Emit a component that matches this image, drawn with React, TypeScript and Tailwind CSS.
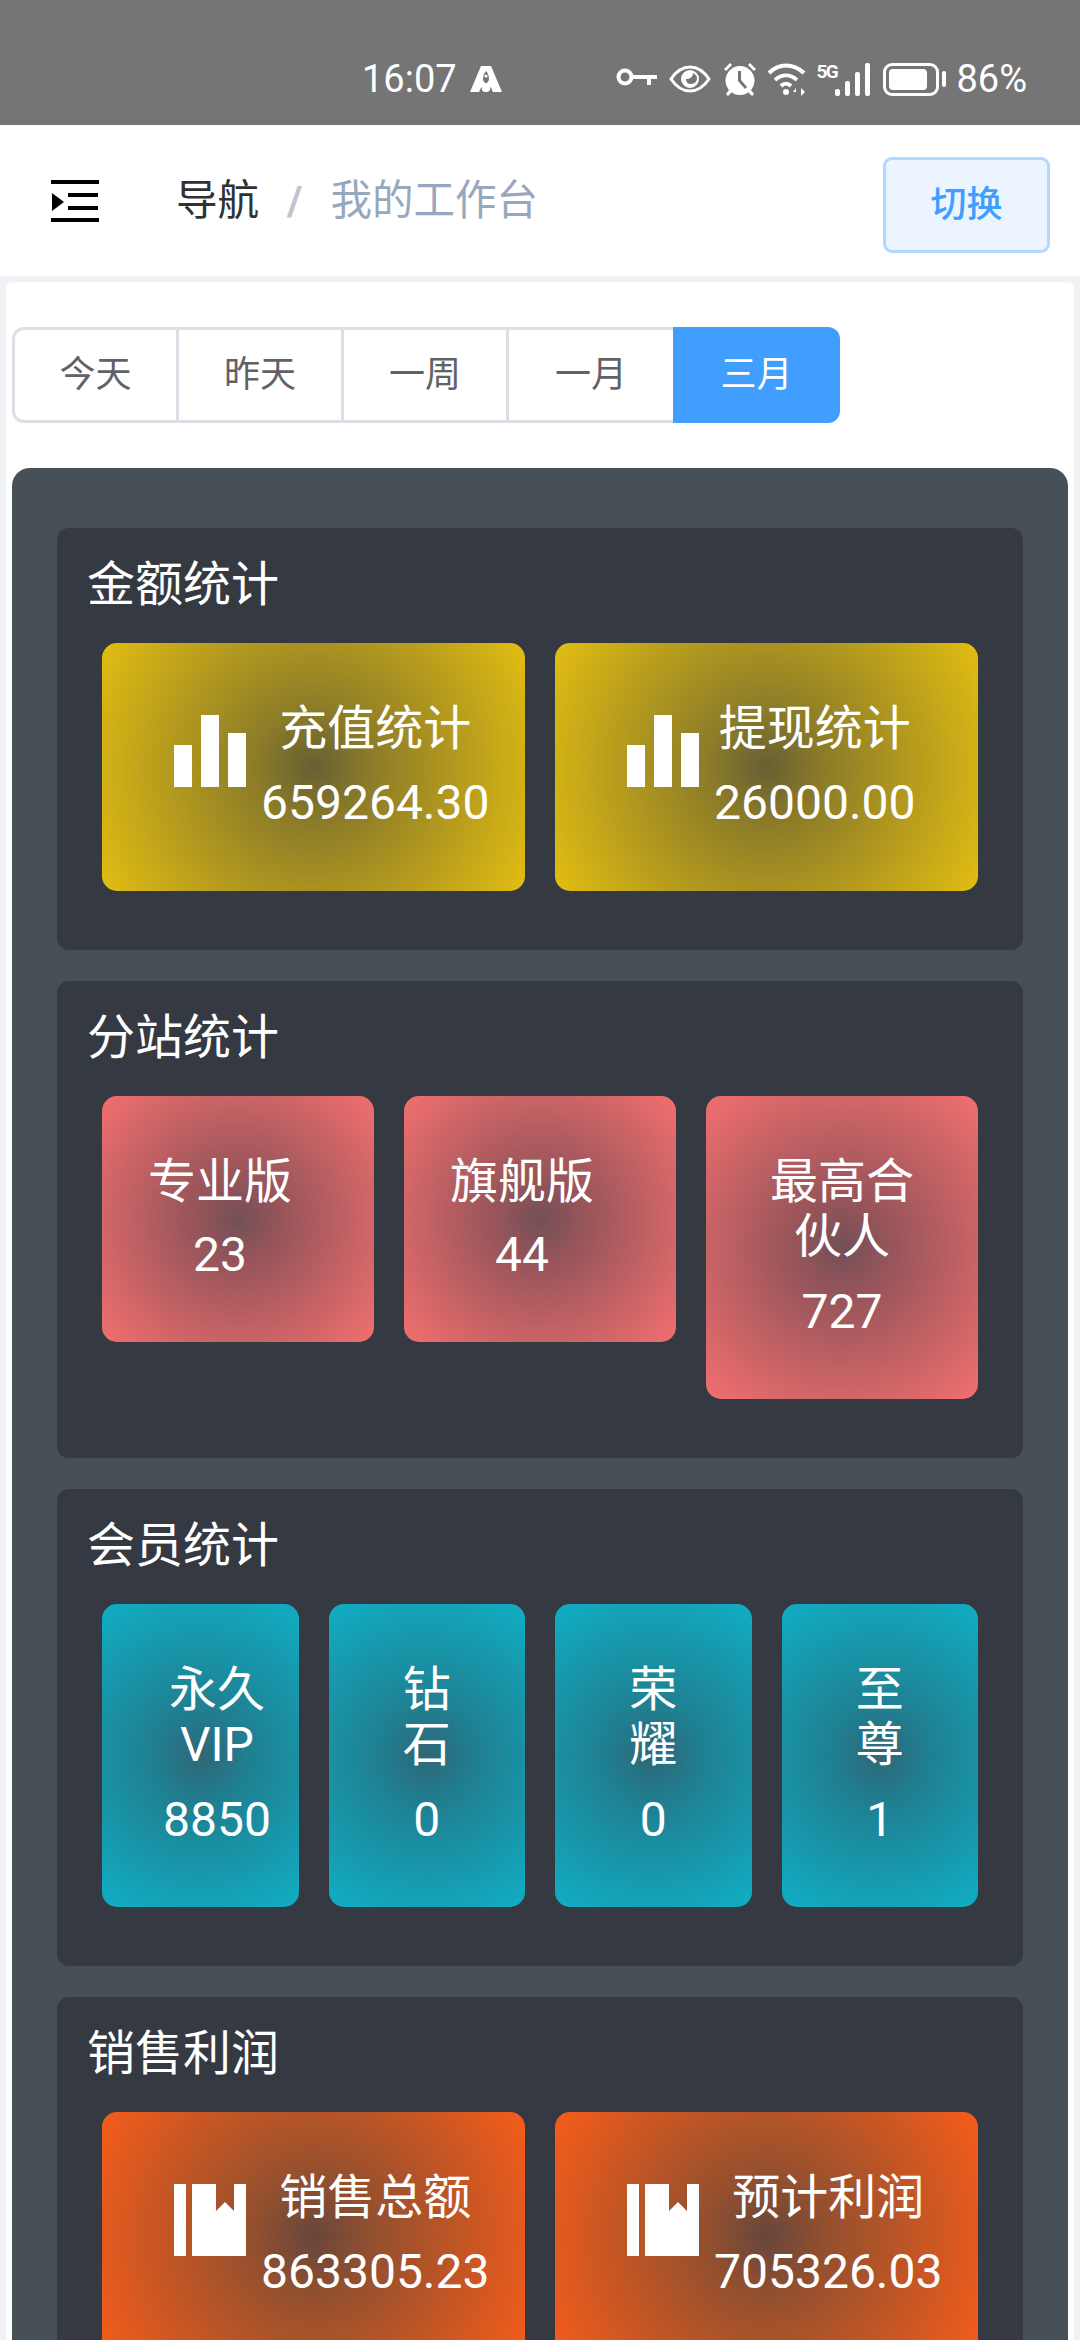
import type { ReactNode } from "react"

const tileBase = "rounded-[15px] pt-[58px] pb-[60px] text-[48px] leading-[55px] text-white"
const gold = "bg-[radial-gradient(circle,#666033,#8e7d28_25%,#e2bd12)]"
const coral = "bg-[radial-gradient(circle,#735057,#98555a_25%,#f26f6f)]"
const teal = "bg-[radial-gradient(circle,#2f6675,#207e90_25%,#10aec4)]"
const orange = "bg-[radial-gradient(circle,#67463c,#94502e_25%,#f65c1a)]"

function StatusBar() {
  return (
    <div className="flex h-[125px] items-center bg-[#757575] pl-[362px] pr-[53px] pt-[33px] text-white">
      <span className="text-[38px] leading-none">16:07</span>
      <svg className="ml-[13px] h-[26px] w-[32px]" viewBox="0 0 32 26" fill="white">
        <path fillRule="evenodd" d="M11 0h10l11 26h-9c-1-1-1-4-3-5 1 3-1 5-4 5s-5-2-4-5c-2 1-2 4-3 5H0zM16 5c-2 2-3 5-3 9l2 3h2l2-3c0-4-1-7-3-9z" />
        <circle cx="16" cy="10" r="1.6" />
      </svg>
      <div className="ml-auto flex items-center">
        <svg className="h-[24px] w-[42px]" viewBox="0 0 42 24" fill="none" stroke="white">
          <circle cx="9" cy="10" r="6.5" strokeWidth="4" />
          <path d="M16 10h25M33 10v8" strokeWidth="4" />
        </svg>
        <svg className="ml-[11px] h-[28px] w-[42px]" viewBox="0 0 42 28" fill="none">
          <path d="M2 14C8 5 14 2 21 2s13 3 19 12c-6 9-12 12-19 12S8 23 2 14z" stroke="white" strokeWidth="3" />
          <path fillRule="evenodd" d="M21 5a9 9 0 1 1 0 18 9 9 0 0 1 0-18zm3 3c0 4-3 6-7 6 0 3 2 5 5 5 4 0 6-3 6-6 0-2-2-4-4-5z" fill="white" />
        </svg>
        <svg className="ml-[11px] h-[34px] w-[36px]" viewBox="0 0 36 34" fill="white">
          <path d="M2 7l6-6 2 2-6 6zM34 7l-6-6-2 2 6 6zM7 28l-3 4 2 2 4-4zM29 28l3 4-2 2-4-4z" />
          <path fillRule="evenodd" d="M18 4a14.5 14.5 0 1 1 0 29 14.5 14.5 0 0 1 0-29zm-2 5v10l7 8 2-2-6-7V9z" />
        </svg>
        <svg className="ml-[9px] h-[34px] w-[40px]" viewBox="0 0 40 34" fill="none" stroke="white" strokeWidth="4">
          <path d="M2 11C12 1 26 1 37 11M8 18c7-6 15-6 22 0M14 24c3-3 7-3 10 0" />
          <circle cx="19" cy="30" r="3" fill="white" stroke="none" />
          <path d="M29 26l-3 4h3v4zM34 26v8l4-4z" fill="white" stroke="none" />
        </svg>
        <span className="ml-[9px] mb-[16px] w-[19px] text-[19px] font-bold leading-none tracking-[-1.5px]">5G</span>
        <div className="flex h-[33px] w-[35px] items-end justify-between">
          <span className="h-[7px] w-[5px] rounded-[2px] bg-white" />
          <span className="h-[15px] w-[5px] rounded-[2px] bg-white" />
          <span className="h-[24px] w-[5px] rounded-[2px] bg-white" />
          <span className="h-[33px] w-[5px] rounded-[2px] bg-white" />
        </div>
        <div className="ml-[13px] flex h-[33px] w-[56px] items-center rounded-[9px] border-[3px] border-white p-[3px]">
          <div className="h-full w-[38px] rounded-[4px] bg-white" />
        </div>
        <span className="ml-[3px] h-[16px] w-[4px] rounded-full bg-white" />
        <span className="ml-[10px] text-[38px] leading-none">86%</span>
      </div>
    </div>
  )
}

function NavBar() {
  return (
    <div className="flex h-[151px] items-center bg-white pl-[51px] pr-[30px]">
      <svg className="h-[42px] w-[48px]" viewBox="0 0 48 42" fill="black">
        <path d="M0 0h48v4H0zM17 13h30v4H17zM17 26h30v4H17zM0 38h48v4H0zM1 13l12 9-12 9z" />
      </svg>
      <div className="ml-[77px] flex items-center text-[41.5px] leading-none">
        <span className="text-[#303133]">导航</span>
        <span className="mx-[28px] font-bold text-[#c0c4cc]">/</span>
        <span className="text-[#97a8be]">我的工作台</span>
      </div>
      <button className="ml-auto mt-[9px] h-[96px] w-[167px] rounded-[9px] border-[3px] border-[#b3d8ff] bg-[#ecf5ff] text-[36px] font-medium text-[#409eff]">
        切换
      </button>
    </div>
  )
}

function Tabs() {
  const items = [
    { label: "今天", cls: "w-[167px] rounded-l-[12px] border-[3px] border-[#dcdfe6] text-[#606266]" },
    { label: "昨天", cls: "w-[165px] border-y-[3px] border-r-[3px] border-[#dcdfe6] text-[#606266]" },
    { label: "一周", cls: "w-[165px] border-y-[3px] border-r-[3px] border-[#dcdfe6] text-[#606266]" },
    { label: "一月", cls: "w-[164px] border-y-[3px] border-[#dcdfe6] text-[#606266]" },
    { label: "三月", cls: "w-[167px] rounded-r-[12px] bg-[#409eff] text-white" },
  ]
  return (
    <div className="ml-[6px] flex h-[96px] w-fit text-[36px]">
      {items.map((item) => (
        <div key={item.label} className={"flex items-center justify-center " + item.cls}>
          {item.label}
        </div>
      ))}
    </div>
  )
}

function Section({ title, cols, children }: { title: string; cols: string; children: ReactNode }) {
  return (
    <section className="rounded-[12px] bg-[#353941] px-[30px] pb-[59px] pt-[29px]">
      <h2 className="text-[48px] font-normal leading-[55px] text-white">{title}</h2>
      <div className={"mx-[15px] mt-[31px] grid items-start gap-[30px] " + cols}>{children}</div>
    </section>
  )
}

function BarsIcon() {
  return (
    <svg className="mt-[14px] h-[72px] w-[72px] shrink-0" viewBox="0 0 72 72" fill="white">
      <path d="M0 30h18v42H0zM27 0h18v72H27zM54 18h18v54H54z" />
    </svg>
  )
}

function BookIcon() {
  return (
    <svg className="mt-[14px] h-[72px] w-[72px] shrink-0" viewBox="0 0 72 72" fill="white">
      <path d="M0 0h12v72H0zM18 0h24v27l9-9 9 9V0h12v72H18z" />
    </svg>
  )
}

function IconTile({ bg, icon, title, value }: { bg: string; icon: ReactNode; title: string; value: string }) {
  return (
    <div className={tileBase + " flex min-h-[248px] pl-[72px] " + bg}>
      {icon}
      <div className="ml-[15px] text-center">
        <div>{title}</div>
        <div className="mt-[19px] text-[48px]">{value}</div>
      </div>
    </div>
  )
}

function TextTile({ bg, lines, value, place }: { bg: string; lines: string[]; value: string; place: string }) {
  return (
    <div className={tileBase + " flex " + place + " " + bg}>
      <div className="text-center">
        {lines.map((line) => (
          <div key={line}>{line}</div>
        ))}
        <div className={(lines.length > 1 ? "mt-[20px]" : "mt-[18px]") + " text-[48px]"}>{value}</div>
      </div>
    </div>
  )
}

export default function App() {
  return (
    <div className="h-[2340px] overflow-hidden bg-[#f0f2f5] [font-family:Roboto,'Noto_Sans_CJK_SC',sans-serif]">
      <StatusBar />
      <NavBar />
      <main className="mx-[6px] mt-[6px] rounded-[6px] bg-white pt-[45px]">
        <Tabs />
        <div className="mx-[6px] mt-[45px] flex flex-col gap-[31px] rounded-[18px] bg-[#474f57] px-[45px] pt-[60px]">
          <Section title="金额统计" cols="grid-cols-2">
            <IconTile bg={gold} icon={<BarsIcon />} title="充值统计" value="659264.30" />
            <IconTile bg={gold} icon={<BarsIcon />} title="提现统计" value="26000.00" />
          </Section>
          <Section title="分站统计" cols="grid-cols-3">
            <TextTile bg={coral} lines={["专业版"]} value="23" place="pl-[46px]" />
            <TextTile bg={coral} lines={["旗舰版"]} value="44" place="pl-[46px]" />
            <TextTile bg={coral} lines={["最高合", "伙人"]} value="727" place="justify-center" />
          </Section>
          <Section title="会员统计" cols="grid-cols-4">
            <TextTile bg={teal} lines={["永久", "VIP"]} value="8850" place="pl-[61px]" />
            <TextTile bg={teal} lines={["钻", "石"]} value="0" place="justify-center" />
            <TextTile bg={teal} lines={["荣", "耀"]} value="0" place="justify-center" />
            <TextTile bg={teal} lines={["至", "尊"]} value="1" place="justify-center" />
          </Section>
          <Section title="销售利润" cols="grid-cols-2">
            <IconTile bg={orange} icon={<BookIcon />} title="销售总额" value="863305.23" />
            <IconTile bg={orange} icon={<BookIcon />} title="预计利润" value="705326.03" />
          </Section>
        </div>
      </main>
    </div>
  )
}
